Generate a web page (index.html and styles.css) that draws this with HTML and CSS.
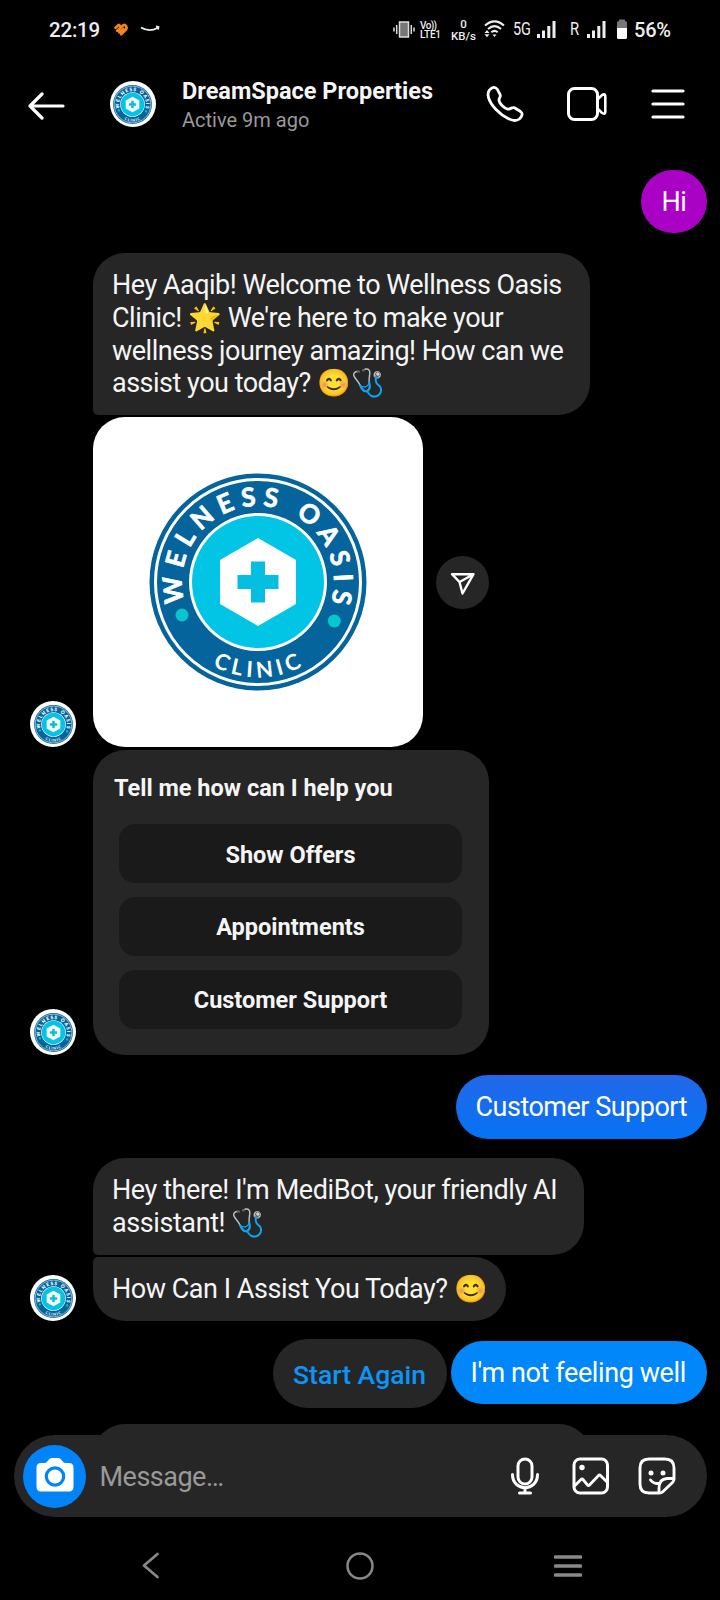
FILE: index.html
```html
<!DOCTYPE html>
<html lang="en">
<head>
<meta charset="utf-8">
<title>DreamSpace Properties</title>
<link rel="stylesheet" href="styles.css">
</head>
<body>
<svg class="defs" width="0" height="0" aria-hidden="true">
  <defs>
    <path id="arc-top" d="M-72.600 22.500A76 76 0 1 1 72.600 22.500"/>
    <path id="arc-bottom" d="M-67.5 67.5A95.5 95.5 0 0 0 67.5 67.5"/>
    <symbol id="logo" viewBox="-109 -109 218 218">
      <circle r="108.5" fill="#04649b"/>
      <circle r="102.5" fill="none" stroke="#fff" stroke-width="3"/>
      <circle r="69" fill="#fff"/>
      <circle r="66" fill="#02c5e6"/>
      <path d="M0-44 38-22V22L0 44-38 22V-22Z" fill="#fff"/>
      <path d="M-7-20.5H7V-7H20.5V7H7V20.5H-7V7H-20.5V-7H-7Z" fill="#04bfdf"/>
      <circle cx="-76" cy="33" r="6.5" fill="#08c6cf"/>
      <circle cx="76.3" cy="39" r="6.5" fill="#08c6cf"/>
      <text class="logo-top" textLength="280"><textPath href="#arc-top" startOffset="2" textLength="280">WELNESS OASIS</textPath></text>
      <text class="logo-bottom" text-anchor="middle"><textPath href="#arc-bottom" startOffset="51%">CLINIC</textPath></text>
    </symbol>
    <symbol id="signal" viewBox="0 0 19 17">
      <path d="M0 13h3v4H0zM5 9.5h3V17H5zM10.300 5h3v12h-3zM15.500 0h3v17h-3z" fill="#eee"/>
    </symbol>
  </defs>
</svg>
<div class="phone">
  <div class="status">
    <span class="clock">22:19</span>
    <svg class="heart" width="14" height="13" viewBox="0 0 14 13"><g stroke="#f58220" stroke-width="2.700" stroke-linecap="round" stroke-linejoin="round" fill="none"><path d="M1.600 4.800 4.600 1.900 6.800 3.600M3.200 7.700 9.300 2.200M5.400 9.300 9.300 6M7.200 11.300 12.200 6.300Q13.300 3.500 10.700 1.900"/></g></svg>
    <svg class="smile" width="20" height="8" viewBox="0 0 20 8"><path d="M1 2.500Q9 7.500 17.500 3M16 1.300l2.500.5L18 4.500" fill="none" stroke="#eee" stroke-width="1.700"/></svg>
    <svg class="vibrate" width="22" height="17" viewBox="0 0 22 17"><rect x="6.500" y="1" width="9" height="15" fill="#777" stroke="#ddd" stroke-width="1.500"/><path d="M1 6.500v4M3.700 4v9M18.300 4v9M21 6.500v4" stroke="#ddd" stroke-width="1.500"/></svg>
    <div class="volte"><span class="vo">Vo))</span><span>LTE1</span></div>
    <div class="speed"><span>0</span><span>KB/s</span></div>
    <svg class="wifi" width="21" height="18" viewBox="0 0 21 18"><g fill="none" stroke="#eee" stroke-width="2"><path d="M1 5.500Q10.500-2.800 20 5.500M4 9Q10.500 3.300 17 9M7.300 12.200q3.200-2.600 6.400 0"/></g><path d="M8.500 14.500h4L10.500 17zM.5 13 3 10l2.500 3zM.5 14.300H5.500L3 17.300z" fill="#eee"/></svg>
    <span class="net five">5G</span>
    <svg class="bars" width="19" height="17"><use href="#signal"/></svg>
    <span class="net roam">R</span>
    <svg class="bars second" width="19" height="17"><use href="#signal"/></svg>
    <svg class="battery" width="10" height="20" viewBox="0 0 10 20"><path d="M0 9V3.500Q0 2 2 2V.5H8V2Q10 2 10 3.500V9Z" fill="#777"/><path d="M0 9H10V18.500Q10 20 8.500 20H1.500Q0 20 0 18.500Z" fill="#fff"/></svg>
    <span class="percent">56%</span>
  </div>

  <header class="header">
    <svg class="back" width="37" height="28" viewBox="0 0 37 28"><path d="M35 14H2M14 2 2 14 14 26" fill="none" stroke="#fff" stroke-width="3.200" stroke-linecap="round" stroke-linejoin="round"/></svg>
    <div class="avatar"><svg width="39" height="39"><use href="#logo"/></svg></div>
    <div class="who"><h1>DreamSpace Properties</h1><p>Active 9m ago</p></div>
    <svg class="call" width="38" height="38" viewBox="0 0 38 38"><path d="M3.500 5C6 1.800 9.200 1.300 11.200 4.200L14 9.300C15.300 12 12.800 12.700 13 15.300C13.300 18.500 18.500 23.500 21.800 24.100C24.200 24.500 25.800 21.800 28.500 22.800L34.500 26.500C37.200 28.500 36.200 31.500 33.300 34C30.700 36 27 36 22.500 33.800C13.500 29.500 4.800 20.500 2.500 12.500C1.700 9.500 1.800 7 3.500 5Z" fill="none" stroke="#fff" stroke-width="2.800" stroke-linejoin="round"/></svg>
    <svg class="video" width="40" height="34" viewBox="0 0 40 34"><rect x="1.500" y="1.500" width="29" height="31" rx="6" fill="none" stroke="#fff" stroke-width="3"/><path d="M30.500 12.500 34.500 8.500Q38 6 38.300 9V25Q38 28 34.500 25.500L30.500 21.500" fill="none" stroke="#fff" stroke-width="2.600"/></svg>
    <svg class="menu" width="34" height="30" viewBox="0 0 34 30"><path d="M2 2H32M2 15H32M2 28H32" stroke="#fff" stroke-width="3.200" stroke-linecap="round"/></svg>
  </header>

  <main class="chat">
    <div class="row out hi"><div class="bubble sent purple">Hi</div></div>
    <div class="row first"><div class="bubble got top welcome">Hey Aaqib! Welcome to Wellness Oasis<br>Clinic! 🌟 We're here to make your<br>wellness journey amazing! How can we<br>assist you today? 😊🩺</div></div>
    <div class="row with-avatar picture-row">
      <div class="avatar"><svg width="39" height="39"><use href="#logo"/></svg></div>
      <div class="picture"><svg width="218" height="218"><use href="#logo"/></svg></div>
      <button class="share" aria-label="Share"><svg width="26" height="24" viewBox="0 0 26 24"><path d="M2 2.200H23.500L12.500 21.500 9.500 10ZM9.500 10 23.500 2.200" fill="none" stroke="#fff" stroke-width="2.400" stroke-linejoin="round"/></svg></button>
    </div>
    <div class="row with-avatar card-row">
      <div class="avatar"><svg width="39" height="39"><use href="#logo"/></svg></div>
      <section class="card">
        <h2>Tell me how can I help you</h2>
        <button>Show Offers</button>
        <button>Appointments</button>
        <button>Customer Support</button>
      </section>
    </div>
    <div class="row out support"><div class="bubble sent indigo">Customer Support</div></div>
    <div class="row bot"><div class="bubble got top medibot">Hey there! I'm MediBot, your friendly AI<br>assistant! 🩺</div></div>
    <div class="row with-avatar ask">
      <div class="avatar"><svg width="39" height="39"><use href="#logo"/></svg></div>
      <div class="bubble got last">How Can I Assist You Today? 😊</div>
    </div>
    <div class="row out replies">
      <button class="again">Start Again</button>
      <div class="bubble sent blue">I'm not feeling well</div>
    </div>
    <div class="row next"><div class="bubble got incoming"></div></div>
  </main>

  <footer class="composer">
    <button class="camera" aria-label="Camera"><svg width="38" height="35" viewBox="0 0 38 35"><path fill="#fff" d="M5 6H8.500Q10.500 6 12 3.500Q13.500 1 15.500 1H22.500Q24.500 1 26 3.500Q27.500 6 29.500 6H33Q37.500 6 37.500 10.500V29.500Q37.500 34.500 33 34.500H5Q.5 34.500 .5 29.500V10.500Q.5 6 5 6Z"/><circle cx="19" cy="19.500" r="8.700" fill="#fff" stroke="#0284f8" stroke-width="3.200"/></svg></button>
    <span class="placeholder">Message…</span>
    <svg class="mic" width="30" height="38" viewBox="0 0 30 38"><rect x="8" y="2" width="14" height="25" rx="7" fill="none" stroke="#fff" stroke-width="3"/><path d="M2.500 17.500C2.500 35 27.500 35 27.500 17.500M15 31V36M9.500 36H20.500" fill="none" stroke="#fff" stroke-width="3" stroke-linecap="round"/></svg>
    <svg class="photo" width="37" height="38" viewBox="0 0 37 38"><rect x="2" y="2" width="33.500" height="34" rx="6" fill="none" stroke="#fff" stroke-width="3"/><circle cx="10" cy="10.500" r="2.700" fill="#fff"/><path d="M2.500 29 9 22.500Q10 21.500 11 22.500L15.500 28Q16.500 29 17.500 28L26.500 18.500Q27.500 17.500 28.500 18.500L35 25" fill="none" stroke="#fff" stroke-width="2.800"/></svg>
    <svg class="sticker" width="38" height="38" viewBox="0 0 38 38"><path d="M21 36H11Q2 36 2 27V11Q2 2 11 2H27Q36 2 36 11V22Q36 24 34.500 25.500L24.500 35Q23.500 36 21 36ZM21 36V31Q21 22 29 21.500H36M12.500 23Q15.500 27 21 26.500" fill="none" stroke="#fff" stroke-width="2.900" stroke-linecap="round" stroke-linejoin="round"/><circle cx="13" cy="16" r="2.500" fill="#fff"/><circle cx="25" cy="16" r="2.500" fill="#fff"/></svg>
  </footer>

  <nav class="nav">
    <svg width="18" height="27" viewBox="0 0 18 27"><path d="M15.500 2 2 13.500 15.500 25" fill="none" stroke="#888" stroke-width="2.700" stroke-linecap="round" stroke-linejoin="round"/></svg>
    <svg width="28" height="28" viewBox="0 0 28 28"><circle cx="14" cy="14" r="12.500" fill="none" stroke="#888" stroke-width="2.500"/></svg>
    <svg width="28" height="24" viewBox="0 0 28 24"><path d="M1.500 3H26.500M1.500 12H26.500M1.500 21H26.500" stroke="#888" stroke-width="3.600" stroke-linecap="round"/></svg>
  </nav>
</div>
</body>
</html>
```
FILE: styles.css
```css
* { box-sizing: border-box; }
body { margin: 0; background: #000; color: #f5f5f5; font-family: Roboto, "Liberation Sans", sans-serif; }
button { border: 0; padding: 0; font-family: inherit; color: inherit; }
svg { display: block; flex: none; }
h1, h2, p { margin: 0; }
.defs { position: absolute; }
.phone { width: 720px; height: 1600px; display: flex; flex-direction: column; background: #000; overflow: hidden; white-space: nowrap; }

.status { height: 58px; padding-left: 49px; display: flex; align-items: center; flex: none; color: #eee; }
.clock { width: 65px; font-size: 20.500px; font-weight: 500; letter-spacing: -.2px; padding-top: 2px; }
.smile { margin-left: 12px; }
.vibrate { margin-left: 233px; }
.volte { width: 21px; margin-left: 5px; display: flex; flex-direction: column; font-size: 10px; line-height: 9px; font-weight: 500; letter-spacing: -.2px; padding-top: 2px; }
.vo { letter-spacing: -.6px; }
.speed { width: 25px; margin-left: 10px; display: flex; flex-direction: column; align-items: center; font-size: 11.500px; line-height: 12.500px; font-weight: 500; padding-top: 2px; }
.wifi { margin-left: 8px; margin-top: -1px; }
.net { font-size: 18.500px; transform-origin: left; }
.five { width: 24px; margin-left: 8px; transform: scaleX(.78); }
.bars { margin-left: 0; }
.roam { width: 17px; margin-left: 14px; transform: scaleX(.8); }
.battery { margin-left: 11px; }
.percent { margin-left: 7px; font-size: 20px; font-weight: 500; letter-spacing: -.2px; padding-top: 2px; }

.header { height: 92px; padding-left: 28px; display: flex; align-items: center; flex: none; }
.back { margin-top: 4px; }
.avatar { width: 46px; height: 46px; border-radius: 50%; background: #fff; display: flex; align-items: center; justify-content: center; flex: none; }
.header .avatar { margin-left: 44.500px; }
.who { margin-left: 26.500px; width: 304px; padding-top: 4px; }
.who h1 { font-size: 23.500px; line-height: 28px; font-weight: 700; }
.who p { font-size: 20px; line-height: 30px; color: #999; }
.video { margin-left: 42.500px; }
.menu { margin-left: 44px; }

.chat { height: 1285px; flex: none; overflow: hidden; padding-top: 19.500px; }
.row { display: flex; padding-left: 93px; }
.with-avatar { padding-left: 30px; align-items: flex-end; gap: 17px; }
.out { justify-content: flex-end; padding-right: 13.500px; }
.bubble { border-radius: 32px; padding: 16px 19px 15px; font-size: 27px; line-height: 32.700px; letter-spacing: -.5px; }
.got { background: #262626; border-radius: 32px; }
.top { border-bottom-left-radius: 5px; }
.last { border-top-left-radius: 5px; }
.sent { color: #fff; padding-left: 19.500px; }
.purple { width: 66px; background: #aa02c4; padding-left: 21px; }
.first { margin-top: 20px; }
.welcome { width: 497px; height: 161.500px; }
.picture-row { margin-top: 2.500px; }
.picture { width: 330px; height: 330px; background: #fff; border-radius: 32px; display: flex; align-items: center; justify-content: center; }
.picture svg { margin-left: -1px; }
.share { width: 53px; height: 53px; border-radius: 50%; background: #262626; display: flex; align-items: center; justify-content: center; align-self: center; margin-left: -4px; padding-top: 3px; }
.card-row { margin-top: 3px; }
.card { width: 396px; height: 305px; border-radius: 32px; background: #262626; padding: 22px 27px 0 26px; display: flex; flex-direction: column; }
.card h2 { margin-left: -5px; font-size: 23.500px; line-height: 32px; font-weight: 700; margin-bottom: 20px; }
.card button { height: 59px; margin-bottom: 13.700px; padding-top: 2px; border-radius: 16px; background: #1a1a1a; font-size: 23.500px; font-weight: 700; flex: none; }
.support { margin-top: 20px; }
.indigo { width: 250.500px; background: linear-gradient(#2268e9, #0672f4); }
.bot { margin-top: 19.500px; }
.medibot { width: 491px; height: 96.500px; letter-spacing: -.42px; }
.ask { margin-top: 2.500px; }
.ask .bubble { width: 413px; letter-spacing: -.47px; }
.replies { margin-top: 17.500px; gap: 4.500px; align-items: flex-start; }
.again { width: 174px; height: 69px; border-radius: 34.500px; background: #262626; color: #0b95f6; font-size: 26.500px; font-weight: 500; padding-top: 3px; }
.blue { width: 255.500px; background: #0287fa; margin-top: 2px; letter-spacing: -.4px; }
.next { margin-top: 16px; }
.incoming { width: 498px; height: 96px; }

.composer { width: 693px; height: 82px; margin: 0 13.500px; flex: none; border-radius: 41px; background: #262626; display: flex; align-items: center; padding-left: 9.500px; }
.camera { width: 63px; height: 63px; border-radius: 50%; background: #0284f8; display: flex; align-items: center; justify-content: center; padding-bottom: 4px; }
.placeholder { margin-left: 13.500px; width: 409.500px; padding-top: 2px; font-size: 27px; letter-spacing: -.5px; color: #999; }
.mic { margin-left: 1px; }
.photo { margin-left: 32px; }
.sticker { margin-left: 29px; }

.nav { height: 83px; padding-top: 14px; display: flex; align-items: center; margin-left: 142px; }
.nav svg:nth-child(2) { margin-left: 186px; }
.nav svg:nth-child(3) { margin-left: 180px; }

.logo-top { font-family: Lato, sans-serif; font-size: 26px; font-weight: 700; fill: #fff; stroke: #fff; stroke-width: .7px; }
.logo-bottom { font-family: Lato, sans-serif; font-size: 22px; font-weight: 700; fill: #fff; letter-spacing: 4.500px; }
```
